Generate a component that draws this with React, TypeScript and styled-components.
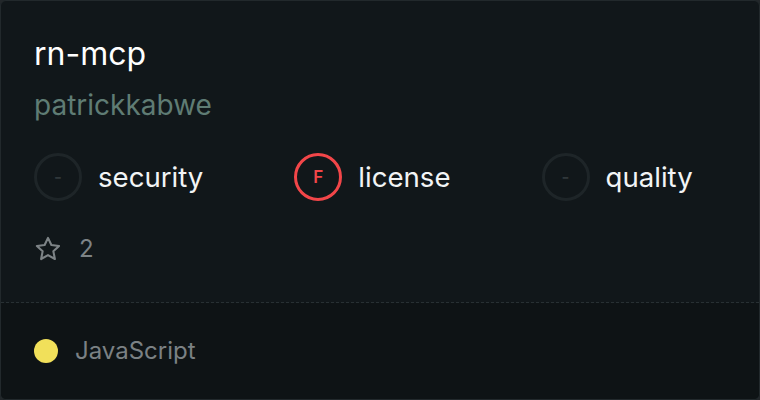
import React from "react";
import styled, { createGlobalStyle } from "styled-components";

const Global = createGlobalStyle`
  html, body { margin: 0; padding: 0; background: #22272a; }
  body { font-family: Inter, "Noto Sans", sans-serif; }
  * { box-sizing: border-box; }
`;

const Card = styled.div`
  width: 760px;
  height: 400px;
  border: 1px solid #22292c;
  border-radius: 6px;
  overflow: hidden;
  background: #11171a;
  display: flex;
  flex-direction: column;
`;

const Top = styled.div`
  flex: 0 0 302px;
  padding: 31px 33px 0;
  display: flex;
  flex-direction: column;
  border-bottom: 1px dashed #283033;
`;

const Title = styled.div`
  color: #ffffff;
  font-size: 32px;
  line-height: 44px;
`;

const Owner = styled.div`
  color: #5f7c74;
  font-size: 28px;
  line-height: 36px;
  margin-top: 11px;
`;

const Scores = styled.div`
  display: flex;
  gap: 91px;
  margin-top: 30px;
`;

const Score = styled.div`
  display: flex;
  align-items: center;
  gap: 16px;
`;

const Ring = styled.div<{ $accent?: string }>`
  width: 48px;
  height: 48px;
  border-radius: 50%;
  border: 3px solid ${(p) => p.$accent ?? "#1e2528"};
  color: ${(p) => p.$accent ?? "#30373a"};
  display: flex;
  align-items: center;
  justify-content: center;
  font-size: 17px;
  font-weight: 600;
`;

const Label = styled.span`
  color: #f2f4f5;
  font-size: 27.6px;
`;

const Stars = styled.div`
  display: flex;
  align-items: center;
  gap: 17px;
  margin-top: 33px;
  color: #7d8386;
  font-size: 24px;
`;

const Bottom = styled.div`
  flex: 1;
  background: #0e1315;
  display: flex;
  align-items: center;
  padding: 0 33px 1px;
  gap: 17px;
`;

const LangDot = styled.span`
  width: 24px;
  height: 24px;
  border-radius: 50%;
  background: #f1e05a;
`;

const Lang = styled.span`
  color: #7b8184;
  font-size: 24px;
`;

export default function App() {
  return (
    <>
      <Global />
      <Card>
        <Top>
          <Title>rn-mcp</Title>
          <Owner>patrickkabwe</Owner>
          <Scores>
            <Score>
              <Ring>-</Ring>
              <Label>security</Label>
            </Score>
            <Score>
              <Ring $accent="#f24649">F</Ring>
              <Label>license</Label>
            </Score>
            <Score>
              <Ring>-</Ring>
              <Label>quality</Label>
            </Score>
          </Scores>
          <Stars>
            <svg width="28" height="28" viewBox="0 0 24 24" fill="none" stroke="currentColor" strokeWidth="1.8" strokeLinejoin="round">
              <path d="M12 2.5l2.9 6.1 6.6.8-4.9 4.6 1.3 6.6L12 17.3l-5.9 3.3 1.3-6.6-4.9-4.6 6.6-.8z" />
            </svg>
            <span>2</span>
          </Stars>
        </Top>
        <Bottom>
          <LangDot />
          <Lang>JavaScript</Lang>
        </Bottom>
      </Card>
    </>
  );
}
